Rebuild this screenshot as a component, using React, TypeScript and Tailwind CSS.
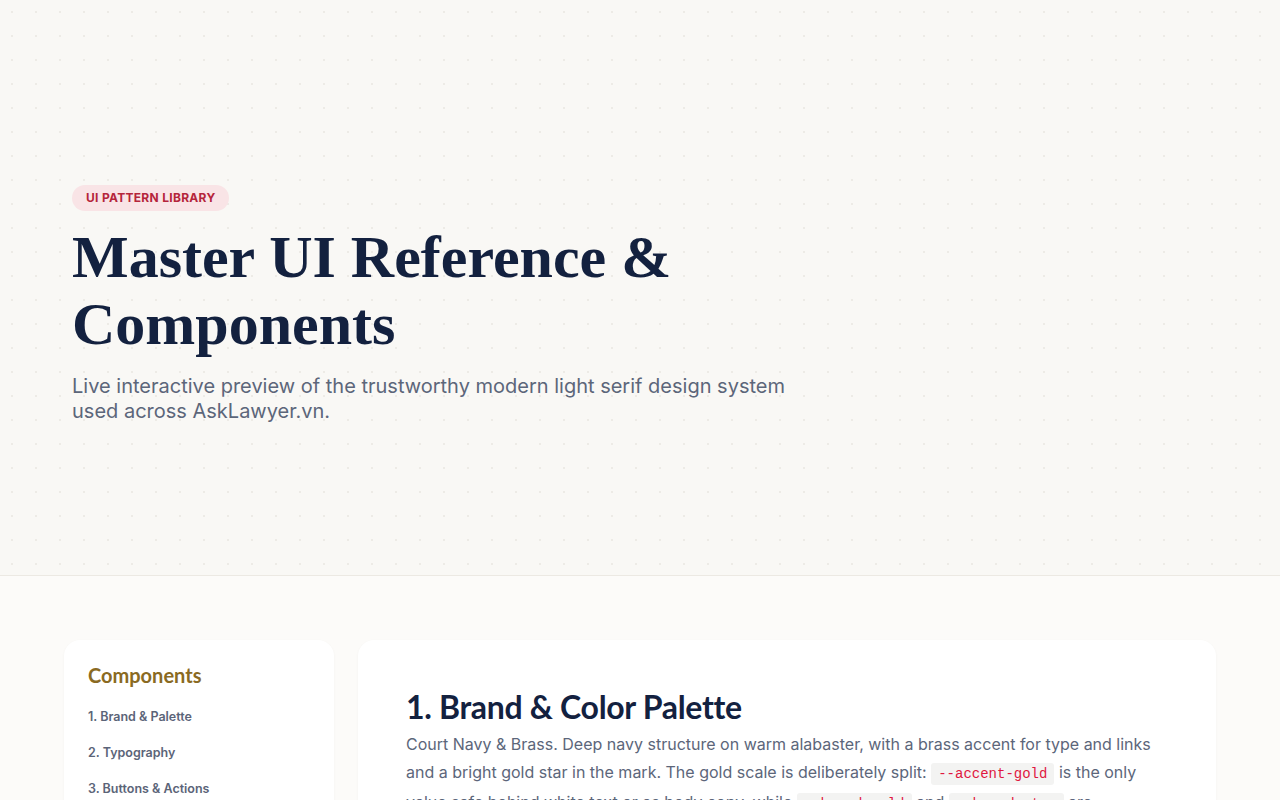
import React from "react";

const navItems = [
  "1. Brand & Palette",
  "2. Typography",
  "3. Buttons & Actions",
  "4. Forms & Inputs",
  "5. Cards & Surfaces",
  "6. Badges & Alerts",
];

function Code({ children }: { children: React.ReactNode }) {
  return (
    <code className="rounded-[3px] bg-[#f3f3f2] px-[7px] py-[3px] font-['Liberation_Mono',monospace] text-[14px] text-[#e0173f]">
      {children}
    </code>
  );
}

export default function App() {
  return (
    <div className="min-h-screen bg-[#fcfbf9] font-['Inter',sans-serif]">
      {/* Hero */}
      <header className="border-b border-[#ece9e3] bg-[#f9f8f5] bg-[radial-gradient(circle,#edebe6_1px,transparent_1.4px)] bg-[size:24px_24px]">
        <div className="px-[72px] pt-[184px] pb-[151px]">
          <span className="inline-flex h-[26px] items-center rounded-full bg-[#f9e4e6] px-[14px] text-[12px] font-bold tracking-[0.025em] text-[#b5253b] uppercase">
            UI Pattern Library
          </span>
          <h1 className="mt-[13px] max-w-[720px] font-['Liberation_Serif',serif] text-[60px] leading-[67px] font-bold text-[#13213f]">
            Master UI Reference &amp; Components
          </h1>
          <p className="mt-[16px] max-w-[740px] text-[20px] leading-[25px] text-[#5c667a]">
            Live interactive preview of the trustworthy modern light serif design system used across AskLawyer.vn.
          </p>
        </div>
      </header>

      {/* Body */}
      <main className="mx-auto flex max-w-[1152px] items-start gap-6 pt-16 pb-16">
        <aside className="w-[270px] shrink-0 rounded-2xl bg-white px-6 pt-[21px] pb-6 shadow-[0_1px_3px_rgba(30,30,20,0.04)]">
          <h3 className="font-['Lato',sans-serif] text-[20px] leading-[28px] font-bold text-[#8a6a22]">
            Components
          </h3>
          <nav className="mt-[10px] flex flex-col">
            {navItems.map((item) => (
              <a
                key={item}
                className="block py-[9px] text-[12.5px] leading-[18px] font-semibold text-[#5b6478]"
              >
                {item}
              </a>
            ))}
          </nav>
        </aside>

        <section className="min-w-0 flex-1 rounded-2xl bg-white px-12 pt-[47px] pb-12 shadow-[0_1px_3px_rgba(30,30,20,0.04)]">
          <h2 className="font-['Lato',sans-serif] text-[32px] leading-[40px] font-bold tracking-[-0.01em] text-[#13213f]">
            1. Brand &amp; Color Palette
          </h2>
          <p className="mt-[3px] text-[16px] leading-[28px] text-[#5c667a]">
            Court Navy &amp; Brass. Deep navy structure on warm alabaster, with a brass accent for type and links and a bright gold star in the mark. The gold scale is deliberately split: <Code>--accent-gold</Code> is the only value safe behind white text or as body copy, while <Code>--brand-gold</Code> and <Code>--brand-star</Code> are decorative fills that should never carry text.
          </p>
          <div className="mt-8 grid grid-cols-4 gap-4">
            {[
              ["Court Navy", "#13213f"],
              ["Accent Gold", "#8a6a22"],
              ["Brand Gold", "#c9a34a"],
              ["Brand Star", "#f2c94c"],
            ].map(([name, hex]) => (
              <div key={name} className="overflow-hidden rounded-xl border border-[#eeece7]">
                <div className="h-20" style={{ background: hex }} />
                <div className="p-3">
                  <div className="text-[13px] font-semibold text-[#13213f]">{name}</div>
                  <div className="font-['Liberation_Mono',monospace] text-[12px] text-[#5c667a]">{hex}</div>
                </div>
              </div>
            ))}
          </div>
        </section>
      </main>
    </div>
  );
}
